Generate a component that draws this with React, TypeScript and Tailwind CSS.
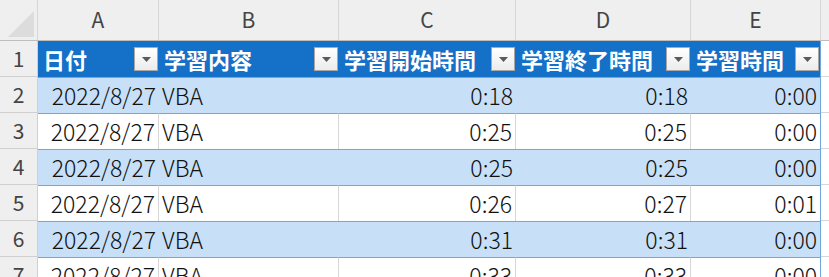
const cols = [
  { key: 'A', w: 'w-[121px]' },
  { key: 'B', w: 'w-[180px]' },
  { key: 'C', w: 'w-[177px]' },
  { key: 'D', w: 'w-[175px]' },
  { key: 'E', w: 'w-[130px]' },
];

const headers = ['日付', '学習内容', '学習開始時間', '学習終了時間', '学習時間'];

const rows = [
  ['2022/8/27', 'VBA', '0:18', '0:18', '0:00'],
  ['2022/8/27', 'VBA', '0:25', '0:25', '0:00'],
  ['2022/8/27', 'VBA', '0:25', '0:25', '0:00'],
  ['2022/8/27', 'VBA', '0:26', '0:27', '0:01'],
  ['2022/8/27', 'VBA', '0:31', '0:31', '0:00'],
  ['2022/8/27', 'VBA', '0:33', '0:33', '0:00'],
];

const font = { fontFamily: '"Noto Sans CJK JP", "Noto Sans", sans-serif' };

const FilterButton = () => (
  <div className="w-[24px] h-[24px] shrink-0 border border-[#a8a8a8] bg-gradient-to-b from-white to-[#ececec] flex items-center justify-center">
    <svg width="9" height="5" viewBox="0 0 9 5">
      <path d="M0 0h9L4.5 5z" fill="#5a5a5a" />
    </svg>
  </div>
);

export default function App() {
  return (
    <div className="w-[829px] h-[277px] overflow-hidden bg-white text-[#222]" style={font}>
      {/* column letters */}
      <div className="flex h-[41px] bg-[#efefef] border-b border-[#bdbdbd]">
        <div className="w-[38px] shrink-0 border-r border-[#d6d6d6] relative">
          <svg className="absolute right-[3px] bottom-[3px]" width="26" height="26" viewBox="0 0 26 26">
            <path d="M26 0V26H0z" fill="#dcdcdc" />
          </svg>
        </div>
        {cols.map((c) => (
          <div
            key={c.key}
            className={`${c.w} shrink-0 border-r border-[#d6d6d6] flex items-center justify-center text-[21px] text-[#444]`}
          >
            {c.key}
          </div>
        ))}
        <div className="flex-1" />
      </div>

      {/* row 1: table header */}
      <div className="flex h-[36px]">
        <div className="w-[38px] shrink-0 bg-[#efefef] border-r border-b border-[#d0d0d0] flex items-center justify-center text-[21px] text-[#444]">
          1
        </div>
        {cols.map((c, i) => (
          <div
            key={c.key}
            className={`${c.w} shrink-0 bg-[#1570c8] flex items-center justify-between pl-[5px] pr-[1px] text-white font-bold text-[22px] ${i === 4 ? 'border-r border-[#6fa8e0]' : ''}`}
          >
            <span className="leading-none">{headers[i]}</span>
            <FilterButton />
          </div>
        ))}
        <div className="flex-1 border-b border-[#d6d6d6]" />
      </div>

      {rows.map((r, ri) => {
        const band = ri % 2 === 0;
        return (
          <div key={ri} className="flex h-[36px]">
            <div className="w-[38px] shrink-0 bg-[#efefef] border-r border-b border-[#d0d0d0] flex items-center justify-center text-[21px] text-[#444]">
              {ri + 2}
            </div>
            {cols.map((c, i) => (
              <div
                key={c.key}
                className={`${c.w} shrink-0 border-t border-[#6fa8e0] flex items-center text-[23px] font-light text-[#111] px-[3px] ${
                  band ? 'bg-[#c7e0f8]' : 'bg-white'
                } ${i === 1 ? 'justify-start' : 'justify-end'} ${
                  i === 4 ? 'border-r border-r-[#6fa8e0]' : band ? '' : 'border-r border-r-[#d6d6d6]'
                }`}
              >
                <span className="leading-none whitespace-nowrap">{r[i]}</span>
              </div>
            ))}
            <div className="flex-1 border-b border-[#d6d6d6]" />
          </div>
        );
      })}
    </div>
  );
}
